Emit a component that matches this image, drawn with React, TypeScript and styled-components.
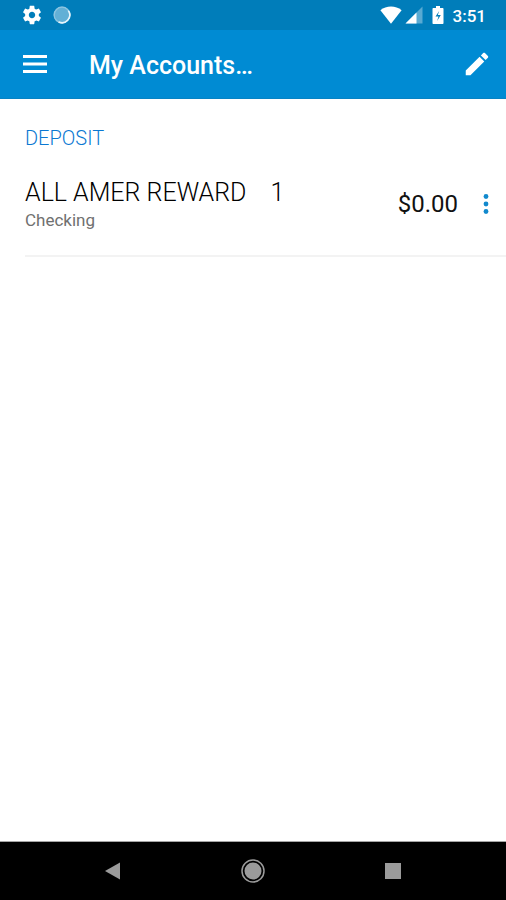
import React from "react";
import styled, { createGlobalStyle } from "styled-components";

const GlobalStyle = createGlobalStyle`
  *, *::before, *::after { box-sizing: border-box; }
  body {
    margin: 0;
    background: #fff;
    font-family: Roboto, "Liberation Sans", sans-serif;
  }
`;

const Screen = styled.div`
  display: flex;
  flex-direction: column;
  min-height: 100vh;
`;

const StatusBar = styled.div`
  display: flex;
  align-items: center;
  justify-content: space-between;
  height: 30px;
  padding: 0 20px 0 21px;
  background: #007dba;
  color: #fff;
`;

const StatusGroup = styled.div<{ $gap: number }>`
  display: flex;
  align-items: center;
  gap: ${(p) => p.$gap}px;
`;

const Clock = styled.time`
  margin-left: 6px;
  font-size: 17px;
  line-height: 30px;
  font-weight: 500;
  padding-top: 2px;
`;

const AppBar = styled.header`
  display: flex;
  align-items: center;
  height: 69px;
  padding: 0 14px 0 23px;
  background: #008bd3;
  border-bottom: 1px solid #0783c4;
  color: #fff;
`;

const Title = styled.h1`
  flex: 1;
  margin: 0 0 0 42px;
  font-size: 25px;
  line-height: 32px;
  font-weight: 500;
  padding-top: 4px;
`;

const IconButton = styled.button`
  display: flex;
  align-items: center;
  justify-content: center;
  padding: 0;
  border: 0;
  background: none;
  color: inherit;
  cursor: pointer;
`;

const Content = styled.main`
  flex: 1;
  padding: 27px 0 0 25px;
`;

const SectionTitle = styled.h2`
  margin: 0;
  font-size: 20px;
  line-height: 24px;
  font-weight: 300;
  color: #0a78d2;
`;

const AccountList = styled.ul`
  margin: 0;
  padding: 0;
  list-style: none;
`;

const AccountRow = styled.li`
  display: flex;
  align-items: center;
  height: 107px;
  padding: 2px 12px 0 0;
  border-bottom: 2px solid #f3f3f3;
`;

const AccountInfo = styled.div`
  flex: 1;
  padding-top: 3px;
`;

const AccountName = styled.div`
  display: flex;
  gap: 24px;
  font-size: 25px;
  line-height: 30px;
  font-weight: 300;
  color: #000;
`;

const AccountKind = styled.div`
  font-size: 17px;
  line-height: 24px;
  font-weight: 400;
  color: #707070;
`;

const Balance = styled.div`
  margin-right: 20px;
  font-size: 24px;
  line-height: 30px;
  font-weight: 400;
  color: #111;
`;

const MoreButton = styled(IconButton)`
  color: #1189cd;
`;

const NavBar = styled.nav`
  display: flex;
  align-items: center;
  justify-content: center;
  gap: 116px;
  height: 59px;
  border-top: 1px solid #a5a5a5;
  background: #000;
  color: #9b9b9b;
`;

const accounts = [
  { name: "ALL AMER REWARD", suffix: "1", kind: "Checking", balance: "$0.00" },
];

export default function App() {
  return (
    <>
      <GlobalStyle />
      <Screen>
        <StatusBar>
          <StatusGroup $gap={10}>
            <svg width="22" height="22" viewBox="0 0 24 24" fill="currentColor" aria-hidden="true">
              <path d="M19.43 12.98c.04-.32.07-.64.07-.98s-.03-.66-.07-.98l2.11-1.65c.19-.15.24-.42.12-.64l-2-3.46c-.12-.22-.39-.3-.61-.22l-2.49 1c-.52-.4-1.08-.73-1.69-.98l-.38-2.65C14.46 2.18 14.25 2 14 2h-4c-.25 0-.46.18-.49.42l-.38 2.65c-.61.25-1.17.59-1.69.98l-2.49-1c-.23-.09-.49 0-.61.22l-2 3.46c-.13.22-.07.49.12.64l2.11 1.65c-.04.32-.07.65-.07.98s.03.66.07.98l-2.11 1.65c-.19.15-.24.42-.12.64l2 3.46c.12.22.39.3.61.22l2.49-1c.52.4 1.08.73 1.69.98l.38 2.65c.03.24.24.42.49.42h4c.25 0 .46-.18.49-.42l.38-2.65c.61-.25 1.17-.59 1.69-.98l2.49 1c.23.09.49 0 .61-.22l2-3.46c.12-.22.07-.49-.12-.64l-2.11-1.65zM12 15.5c-1.93 0-3.5-1.57-3.5-3.5s1.57-3.5 3.5-3.5 3.5 1.57 3.5 3.5-1.57 3.5-3.5 3.5z" />
            </svg>
            <svg width="18" height="18" viewBox="0 0 18 18" fill="none" aria-hidden="true">
              <circle cx="9" cy="9" r="8.5" fill="#62b0d6" />
              <circle cx="9" cy="9" r="7.8" stroke="#8cc5e1" strokeWidth="1.2" />
              <path d="M15.4 4.6A7.8 7.8 0 0 1 5.6 16" stroke="#e8f5fb" strokeWidth="1.6" />
            </svg>
          </StatusGroup>
          <StatusGroup $gap={3}>
            <svg width="22" height="18" viewBox="0 0 22 18" fill="currentColor" aria-hidden="true">
              <path d="M11 17.8 L0.4 4.2 C6.2 -0.7 15.8 -0.7 21.6 4.2 Z" />
            </svg>
            <svg width="18" height="18" viewBox="0 0 18 18" fill="currentColor" aria-hidden="true">
              <path d="M17.5 0.5V17.5H0.5Z" opacity="0.35" />
              <path d="M11.5 6.5V17.5H0.5Z" />
            </svg>
            <svg width="18" height="20" viewBox="0 0 18 20" fill="currentColor" aria-hidden="true">
              <path
                fillRule="evenodd"
                d="M10 1h4v2h2.5c.6 0 1 .4 1 1v14c0 .6-.4 1-1 1h-9c-.6 0-1-.4-1-1V4c0-.6.4-1 1-1H10ZM13.2 6l-3.7 5.6h3l-1.4 4.4 3.7-6h-3Z"
              />
            </svg>
            <Clock>3:51</Clock>
          </StatusGroup>
        </StatusBar>
        <AppBar>
          <IconButton aria-label="Open menu">
            <svg width="24" height="18" viewBox="0 0 24 18" fill="currentColor" aria-hidden="true">
              <path d="M0 0H24V3H0ZM0 7.5H24V10.5H0ZM0 15H24V18H0Z" />
            </svg>
          </IconButton>
          <Title>My Accounts…</Title>
          <IconButton aria-label="Edit accounts">
            <svg width="30" height="30" viewBox="0 0 24 24" fill="currentColor" aria-hidden="true">
              <path d="M3 17.25V21h3.75L17.81 9.94l-3.75-3.75L3 17.25zM20.71 7.04c.39-.39.39-1.02 0-1.41l-2.34-2.34c-.39-.39-1.02-.39-1.41 0l-1.83 1.83 3.75 3.75 1.83-1.83z" />
            </svg>
          </IconButton>
        </AppBar>
        <Content>
          <SectionTitle>DEPOSIT</SectionTitle>
          <AccountList>
            {accounts.map((account) => (
              <AccountRow key={account.name}>
                <AccountInfo>
                  <AccountName>
                    <span>{account.name}</span>
                    <span>{account.suffix}</span>
                  </AccountName>
                  <AccountKind>{account.kind}</AccountKind>
                </AccountInfo>
                <Balance>{account.balance}</Balance>
                <MoreButton aria-label="More options">
                  <svg width="16" height="24" viewBox="0 0 16 24" fill="currentColor" aria-hidden="true">
                    <circle cx="8" cy="4.5" r="2.4" />
                    <circle cx="8" cy="12" r="2.4" />
                    <circle cx="8" cy="19.5" r="2.4" />
                  </svg>
                </MoreButton>
              </AccountRow>
            ))}
          </AccountList>
        </Content>
        <NavBar>
          <IconButton aria-label="Back">
            <svg width="24" height="24" viewBox="0 0 24 24" fill="currentColor" aria-hidden="true">
              <path d="M4 12 19 3.5V20.5Z" />
            </svg>
          </IconButton>
          <IconButton aria-label="Home">
            <svg width="24" height="24" viewBox="0 0 24 24" aria-hidden="true">
              <circle cx="12" cy="12" r="11" fill="none" stroke="currentColor" strokeWidth="1.5" />
              <circle cx="12" cy="12" r="8.5" fill="currentColor" />
            </svg>
          </IconButton>
          <IconButton aria-label="Recent apps">
            <svg width="24" height="24" viewBox="0 0 24 24" fill="currentColor" aria-hidden="true">
              <path d="M4 4H20V20H4Z" />
            </svg>
          </IconButton>
        </NavBar>
      </Screen>
    </>
  );
}
